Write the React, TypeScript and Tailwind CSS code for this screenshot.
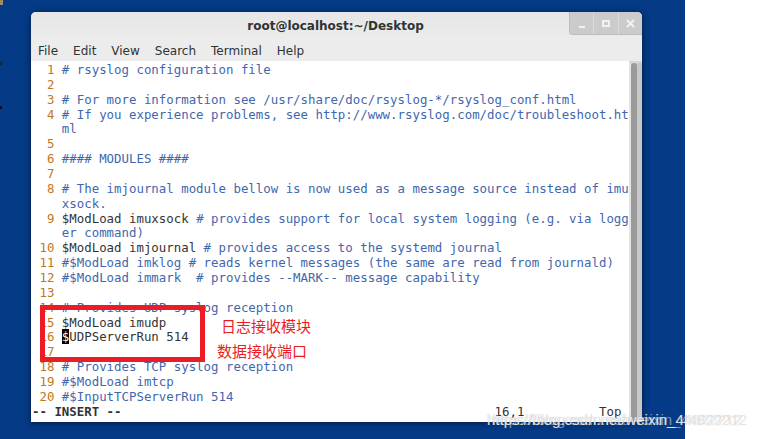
import React from 'react'

type Row = { n: string; p?: string; c?: string; cursor?: string }

const rows: Row[] = [
  { n: '  1 ', c: '# rsyslog configuration file' },
  { n: '  2 ' },
  { n: '  3 ', c: '# For more information see /usr/share/doc/rsyslog-*/rsyslog_conf.html' },
  { n: '  4 ', c: '# If you experience problems, see http://www.rsyslog.com/doc/troubleshoot.ht' },
  { n: '    ', c: 'ml' },
  { n: '  5 ' },
  { n: '  6 ', c: '#### MODULES ####' },
  { n: '  7 ' },
  { n: '  8 ', c: '# The imjournal module bellow is now used as a message source instead of imu' },
  { n: '    ', c: 'xsock.' },
  { n: '  9 ', p: '$ModLoad imuxsock ', c: '# provides support for local system logging (e.g. via logg' },
  { n: '    ', c: 'er command)' },
  { n: ' 10 ', p: '$ModLoad imjournal ', c: '# provides access to the systemd journal' },
  { n: ' 11 ', c: '#$ModLoad imklog # reads kernel messages (the same are read from journald)' },
  { n: ' 12 ', c: '#$ModLoad immark  # provides --MARK-- message capability' },
  { n: ' 13 ' },
  { n: ' 14 ', c: '# Provides UDP syslog reception' },
  { n: ' 15 ', p: '$ModLoad imudp' },
  { n: ' 16 ', cursor: '$', p: 'UDPServerRun 514' },
  { n: ' 17 ' },
  { n: ' 18 ', c: '# Provides TCP syslog reception' },
  { n: ' 19 ', c: '#$ModLoad imtcp' },
  { n: ' 20 ', c: '#$InputTCPServerRun 514' },
]

const menus = ['File', 'Edit', 'View', 'Search', 'Terminal', 'Help']

export default function App() {
  return (
    <div className="relative w-[769px] h-[439px] flex overflow-hidden">
      <div className="relative w-[685px] h-full bg-[#043a86]">
        {/* bits of desktop icons at the left edge */}
        <span className="absolute left-0 top-0 w-[3px] h-[5px] bg-[#a08a66]" />
        <span className="absolute left-0 top-[62px] w-[2px] h-[3px] bg-[#1a2230]" />
        <span className="absolute left-0 top-[106px] w-[2px] h-[3px] bg-[#0a0f18]" />

        {/* terminal window */}
        <div className="absolute left-[31px] top-[12px] w-[611px] h-[410px] flex flex-col rounded-t-[5px] bg-[#ececec] shadow-[0_1px_6px_rgba(0,0,0,0.55)] overflow-hidden">
          <div className="relative h-[28px] flex items-center justify-center bg-gradient-to-b from-[#e6e6e6] to-[#ececec]">
            <span className="font-['DejaVu_Sans',sans-serif] font-bold text-[12px] text-[#2e3436] ml-[-2px]">
              root@localhost:~/Desktop
            </span>
            <div className="absolute right-0 top-0 h-[23px] w-[73px] flex rounded-bl-[4px] bg-[#cbcbcb] border-l border-b border-[#bdbdbd]">
              <div className="flex-1 flex items-end justify-center pb-[6px] border-r border-[#dadada]">
                <span className="w-[6px] h-[2px] bg-[#f2f2f2]" />
              </div>
              <div className="flex-1 flex items-center justify-center border-r border-[#dadada]">
                <span className="w-[8px] h-[7px] border-2 border-[#f2f2f2]" />
              </div>
              <div className="flex-1 flex items-center justify-center">
                <svg width="9" height="9" viewBox="0 0 9 9">
                  <path d="M1 1 L8 8 M8 1 L1 8" stroke="#f2f2f2" strokeWidth="2" />
                </svg>
              </div>
            </div>
          </div>
          <div className="h-[21px] flex items-center gap-[15px] pl-[7px] font-['DejaVu_Sans',sans-serif] text-[12px] text-[#2e3436]">
            {menus.map((m) => (
              <span key={m}>{m}</span>
            ))}
          </div>
          <div className="relative flex-1 flex bg-white">
            <div className="relative w-[598px] pl-[1px] pt-[2px] font-['DejaVu_Sans_Mono',monospace] text-[12.4px] leading-[14.86px] text-[#333]">
              {rows.map((r, i) => (
                <div key={i} className="h-[14.86px] whitespace-pre">
                  <span className="text-[#c4761c]">{r.n}</span>
                  {r.cursor && <span className="bg-black text-white">{r.cursor}</span>}
                  {r.p && <span>{r.p}</span>}
                  {r.c && <span className="text-[#3f67ad]">{r.c}</span>}
                </div>
              ))}
              <div className="h-[14.86px] whitespace-pre">
                <span className="font-bold">-- INSERT --</span>
                <span>{' '.repeat(50)}16,1{' '.repeat(10)}Top</span>
              </div>

              {/* annotation */}
              <div className="absolute left-[9px] top-[244px] w-[165px] h-[57px] border-[5px] border-[#ec1c24]" />
              <span className="absolute left-[190px] top-[255px] font-['Noto_Sans_CJK_SC',sans-serif] text-[15px] leading-[20px] text-[#ec1c24]">
                日志接收模块
              </span>
              <span className="absolute left-[186px] top-[280px] font-['Noto_Sans_CJK_SC',sans-serif] text-[15px] leading-[20px] text-[#ec1c24]">
                数据接收端口
              </span>
            </div>
            <div className="flex-1 flex bg-[#d6d6d6] pt-[2px]">
              <div className="w-[2px] bg-[#e4e4e4]" />
              <div className="w-[6px] rounded-t-[3px] bg-[#9a9a9a]" />
              <div className="flex-1 bg-[#c8c8c8]" />
            </div>
          </div>
        </div>
      </div>
      <div className="flex-1 bg-white" />

      {/* watermark: two overlapping copies */}
      <div className="absolute left-[487px] top-[411px] font-['Liberation_Sans',sans-serif] text-[15px] leading-[18px] whitespace-pre">
        <span className="absolute left-[5px] top-0 text-[#d0d0d0]/60">https://blog.csdn.net/weixin_44822212</span>
        <span className="relative text-white/80 [text-shadow:0_0_1px_rgba(120,120,120,0.6)]">https://blog.csdn.net/weixin_44822212</span>
      </div>
    </div>
  )
}
